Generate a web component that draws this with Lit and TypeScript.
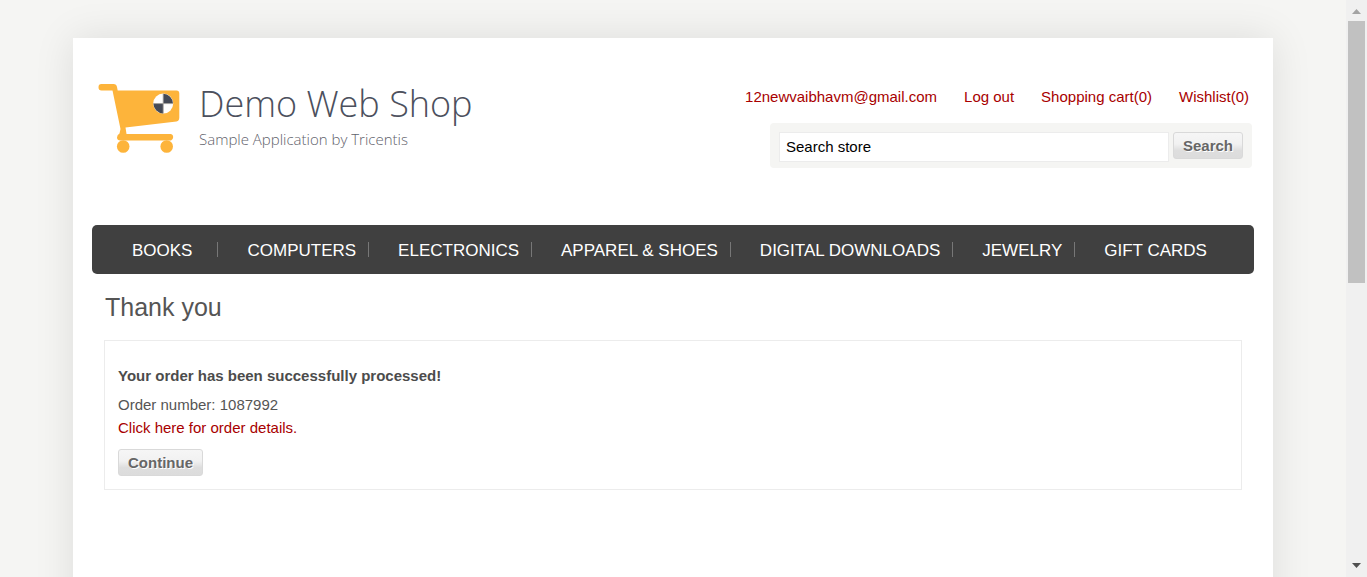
import { LitElement, html, css } from "lit";
import { customElement, property } from "lit/decorators.js";

@customElement("shop-logo")
class ShopLogo extends LitElement {
  static styles = css`
    :host { display: block; }
    .logo { display: flex; gap: 18px; color: #4c505d; text-decoration: none; }
    .cart { display: block; flex: none; }
    .words {
      display: flex;
      flex-direction: column;
      font-family: "Open Sans", "Noto Sans", sans-serif;
      font-weight: 300;
    }
    .name { font-size: 36px; line-height: 42px; padding-bottom: 2px; white-space: nowrap; }
    .tagline { font-size: 15px; line-height: 24px; color: #5f626b; white-space: nowrap; }
  `;
  render() {
    return html`
      <a class="logo" href="#">
        <svg class="cart" width="83" height="72" viewBox="0 0 83 72" aria-hidden="true">
          <path fill="#fdb43b" d="M3.500 1H15.500Q18.500 1 19 4L19.700 7.500H78.500Q81.300 7.500 81.300 10.500V34.500Q81.300 38 78.500 38.500L27.500 44.500L28.500 51H73Q75.200 51.500 75.200 54T73 57.500H22.500Q19 57.500 19 54.500Q19 52 21.500 50.500L22.500 46L14.500 7.500H3.500Q.5 7.500 .5 4.200T3.500 1Z"/>
          <circle cx="25.200" cy="63.500" r="6.300" fill="#fdb43b"/>
          <circle cx="68.700" cy="63.500" r="6.300" fill="#fdb43b"/>
          <circle cx="65.200" cy="20.600" r="10" fill="#fff"/>
          <path fill="#454a57" d="M65.200 20.600V10.800A9.800 9.800 0 0 1 75 20.600ZM65.200 20.600V30.400A9.800 9.800 0 0 1 55.400 20.600Z"/>
          <path fill="none" stroke="#a3a09a" stroke-width=".8" d="M65.200 10.800V30.400M55.400 20.600H75"/>
        </svg>
        <span class="words">
          <span class="name">Demo Web Shop</span>
          <span class="tagline">Sample Application by Tricentis</span>
        </span>
      </a>
    `;
  }
}

@customElement("shop-button")
class ShopButton extends LitElement {
  @property() label = "";
  static styles = css`
    :host { display: inline-block; }
    .button {
      display: block;
      height: 27px;
      padding: 0 9px;
      border: 1px solid #d9d9d9;
      border-radius: 3px;
      background: linear-gradient(#f6f6f6, #f1f1f1 45%, #dedede 70%, #dcdcdc);
      font: bold 15px/25px "Liberation Sans", Arial, sans-serif;
      color: #666;
      text-shadow: 1px 1px 0 #fff;
      cursor: pointer;
    }
  `;
  render() {
    return html`<button class="button" type="button">${this.label}</button>`;
  }
}

@customElement("app-root")
class AppRoot extends LitElement {
  static styles = css`
    * { box-sizing: border-box; }
    :host {
      display: grid;
      grid-template-columns: minmax(0, 1fr) 21px;
      height: 100vh;
      overflow: hidden;
      background: #f5f5f3;
      font: 15px/23px "Liberation Sans", Arial, sans-serif;
      color: #555;
    }
    a { color: #a80000; text-decoration: none; }
    .viewport { min-width: 0; overflow: hidden; padding: 38px 20px 0; }
    .page {
      max-width: 1200px;
      height: 200%;
      margin: 0 auto;
      padding: 0 19px;
      background: #fff;
      box-shadow: 0 0 38px rgba(0, 0, 0, 0.1);
    }
    .header {
      display: flex;
      justify-content: space-between;
      align-items: flex-start;
      padding: 45px 2px 57px 6px;
    }
    .tools { display: flex; flex-direction: column; align-items: flex-end; gap: 15px; padding-top: 2px; }
    .links { display: flex; gap: 27px; margin: 0; padding: 0 3px 0 0; list-style: none; white-space: nowrap; }
    .search {
      display: flex;
      align-items: flex-start;
      gap: 4px;
      width: 482px;
      padding: 9px 9px 6px;
      border-radius: 4px;
      background: #f5f5f3;
    }
    .field {
      flex: 1;
      min-width: 0;
      height: 30px;
      padding: 0 6px 2px;
      border: 1px solid #ececec;
      border-radius: 0;
      background: #fff;
      font: inherit;
      color: #000;
    }
    .menu {
      display: flex;
      align-items: center;
      height: 49px;
      margin: 0;
      padding: 0 0 0 11px;
      border-radius: 5px;
      background: #404040;
      list-style: none;
      white-space: nowrap;
    }
    .item { height: 15px; padding: 0 12px 0 29px; border-right: 1px solid #777; font-size: 17px; line-height: 17px; }
    .item:first-child { padding-right: 25px; }
    .item:last-child { border-right: 0; }
    .item a { color: #fff; }
    .content { padding: 18px 12px; }
    .title { margin: 0 0 17px; padding-left: 1px; font-size: 25px; font-weight: normal; line-height: 31px; }
    .card { padding: 23px 13px 13px; border: 1px solid #ececec; }
    .done { display: block; margin-bottom: 6px; color: #4c4c4c; }
    .card p { margin: 0; }
    .continue { display: block; width: max-content; margin-top: 10px; }
    .scrollbar {
      display: flex;
      flex-direction: column;
      align-items: center;
      background: #f0f0f0;
    }
    .arrow { display: block; flex: none; }
    .track { flex: 1; width: 17px; }
    .thumb { height: 49%; background: #c1c1c1; }
  `;

  private links = ["12newvaibhavm@gmail.com", "Log out", "Shopping cart(0)", "Wishlist(0)"];
  private categories = ["Books", "Computers", "Electronics", "Apparel & Shoes", "Digital downloads", "Jewelry", "Gift Cards"];

  render() {
    return html`
      <div class="viewport">
        <div class="page">
          <header class="header">
            <shop-logo></shop-logo>
            <div class="tools">
              <ul class="links">
                ${this.links.map((text) => html`<li><a href="#">${text}</a></li>`)}
              </ul>
              <form class="search">
                <input class="field" type="text" aria-label="Search store" .value=${"Search store"} />
                <shop-button label="Search"></shop-button>
              </form>
            </div>
          </header>
          <nav>
            <ul class="menu">
              ${this.categories.map((text) => html`<li class="item"><a href="#">${text.toUpperCase()}</a></li>`)}
            </ul>
          </nav>
          <main class="content">
            <h1 class="title">Thank you</h1>
            <section class="card">
              <strong class="done">Your order has been successfully processed!</strong>
              <p>Order number: 1087992</p>
              <p><a href="#">Click here for order details.</a></p>
              <shop-button class="continue" label="Continue"></shop-button>
            </section>
          </main>
        </div>
      </div>
      <div class="scrollbar" aria-hidden="true">
        <svg class="arrow" width="21" height="21"><path d="M10.500 9L15 14H6Z" fill="#a3a3a3"/></svg>
        <div class="track"><div class="thumb"></div></div>
        <svg class="arrow" width="21" height="21"><path d="M6 7H15L10.500 12Z" fill="#505050"/></svg>
      </div>
    `;
  }
}
